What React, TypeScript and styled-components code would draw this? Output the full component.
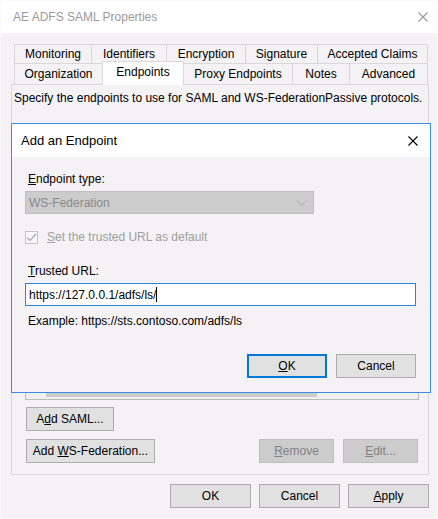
import React from "react";
import styled, { createGlobalStyle, css } from "styled-components";

const GlobalStyle = createGlobalStyle`
  html, body { margin: 0; padding: 0; background: #ffffff; }
  body { font-family: "Liberation Sans", Arial, sans-serif; font-size: 12px; color: #000; }
  * { box-sizing: border-box; }
`;

const BG = "#f4f2f5";

const Window = styled.div`
  position: relative;
  width: 438px;
  height: 519px;
  border: 1px solid #f9f9f9;
  background: ${BG};
  display: flex;
  flex-direction: column;
`;

const TitleBar = styled.div`
  height: 32px;
  background: #ffffff;
  display: flex;
  align-items: center;
  justify-content: space-between;
  padding: 0 9px 0 12px;
  flex: none;
`;

const WindowTitle = styled.span`
  font-size: 12px;
  color: #9a9a9a;
`;

const Body = styled.div`
  flex: 1;
  display: flex;
  flex-direction: column;
  padding: 11px 8px 10px 10px;
`;

const TabRows = styled.div`
  display: flex;
  flex-direction: column;
  margin-left: 3px;
  width: 414px;
`;

const TabRow = styled.div<{ $front?: boolean }>`
  display: flex;
  height: ${(p) => (p.$front ? 21 : 19)}px;
  align-items: stretch;
`;

const Tab = styled.div<{ $w: number; $selected?: boolean }>`
  width: ${(p) => p.$w}px;
  flex: none;
  border: 1px solid #d9d9d9;
  border-bottom: none;
  background: ${BG};
  display: flex;
  align-items: center;
  justify-content: center;
  font-size: 12px;
  color: #000;
  white-space: nowrap;
  & + & { margin-left: -1px; }
  ${(p) =>
    p.$selected &&
    css`
      background: #ffffff;
      position: relative;
      z-index: 2;
      margin-top: -2px;
      margin-bottom: -1px;
      padding-bottom: 3px;
    `}
`;

const Panel = styled.div`
  height: 391px;
  border: 1px solid #d9d9d9;
  background: ${BG};
  display: flex;
  flex-direction: column;
  padding: 6px 8px 0 13px;
`;

const Description = styled.div`
  margin-left: -11px;
  line-height: 15px;
  font-size: 12px;
  white-space: nowrap;
`;

const ListBox = styled.div`
  margin-top: 22px;
  height: 272px;
  width: 394px;
  border: 1px solid #bdbdbd;
  background: #ffffff;
  display: flex;
  flex-direction: column;
  justify-content: flex-end;
`;

const HScroll = styled.div`
  height: 17px;
  background: #f0f0f0;
  display: flex;
  align-items: stretch;
  padding: 1px 0 2px;
`;

const ScrollThumb = styled.div`
  margin-left: 20px;
  width: 271px;
  background: #cdcdcd;
`;

const ButtonRow = styled.div<{ $gap: number }>`
  display: flex;
  align-items: center;
  margin-top: ${(p) => p.$gap}px;
  margin-left: 1px;
  margin-right: 2px;
  gap: 9px;
`;

const Spacer = styled.div`
  flex: 1;
`;

const Button = styled.button<{ $w: number; $disabled?: boolean; $default?: boolean }>`
  width: ${(p) => p.$w}px;
  height: 24px;
  padding: 0;
  font-family: "Liberation Sans", Arial, sans-serif;
  font-size: 12px;
  background: #e1e1e1;
  border: 1px solid #adadad;
  color: #000;
  display: flex;
  align-items: center;
  justify-content: center;
  white-space: pre;
  ${(p) =>
    p.$disabled &&
    css`
      background: #cccccc;
      border-color: #bfbfbf;
      color: #838383;
    `}
  ${(p) =>
    p.$default &&
    css`
      border-color: #0078d7;
      box-shadow: inset 0 0 0 1px #0078d7;
    `}
`;

const Footer = styled.div`
  display: flex;
  justify-content: flex-end;
  gap: 8px;
  margin-top: 9px;
`;

/* ---------- Dialog ---------- */

const Dialog = styled.div`
  position: absolute;
  left: 10px;
  top: 122px;
  width: 420px;
  height: 270px;
  border: 1px solid #3a8ee0;
  background: ${BG};
  display: flex;
  flex-direction: column;
  z-index: 5;
`;

const DialogTitleBar = styled.div`
  height: 33px;
  background: #ffffff;
  display: flex;
  align-items: center;
  justify-content: space-between;
  padding: 0 12px 0 9px;
  flex: none;
`;

const DialogTitle = styled.span`
  font-size: 13px;
  color: #000;
`;

const DialogBody = styled.div`
  display: flex;
  flex-direction: column;
  padding: 14px 14px 0 13px;
`;

const Label = styled.div<{ $top: number; $disabled?: boolean }>`
  margin-top: ${(p) => p.$top}px;
  margin-left: 3px;
  line-height: 16px;
  font-size: 12px;
  color: ${(p) => (p.$disabled ? "#a0a0a0" : "#000")};
  white-space: nowrap;
`;

const Combo = styled.div`
  margin-top: 4px;
  width: 289px;
  height: 23px;
  background: #cccccc;
  border: 1px solid #bfbfbf;
  display: flex;
  align-items: center;
  justify-content: space-between;
  padding: 0 6px 0 3px;
  color: #8a8a8a;
  font-size: 12px;
`;

const CheckRow = styled.div`
  margin-top: 15px;
  height: 16px;
  display: flex;
  align-items: center;
  gap: 9px;
  color: #a0a0a0;
  font-size: 12px;
`;

const CheckBox = styled.div`
  width: 13px;
  height: 13px;
  border: 1px solid #c4c4c4;
  background: #f7f7f7;
  display: flex;
  align-items: center;
  justify-content: center;
`;

const TextInput = styled.div`
  margin-top: 4px;
  width: 391px;
  height: 23px;
  background: #ffffff;
  border: 1px solid #2a84d8;
  display: flex;
  align-items: center;
  padding-left: 3px;
  font-size: 12px;
  color: #000;
`;

const Caret = styled.span`
  display: inline-block;
  width: 1px;
  height: 15px;
  background: #000;
`;

const DialogButtons = styled.div`
  margin-top: 25px;
  display: flex;
  justify-content: flex-end;
  gap: 9px;
`;

const CloseIcon = ({ color }: { color: string }) => (
  <svg width="10" height="10" viewBox="0 0 10 10">
    <path d="M0.5 0.5L9.5 9.5M9.5 0.5L0.5 9.5" stroke={color} strokeWidth="1.1" fill="none" />
  </svg>
);

export default function App() {
  return (
    <>
      <GlobalStyle />
      <Window>
        <TitleBar>
          <WindowTitle>AE ADFS SAML Properties</WindowTitle>
          <CloseIcon color="#9a9a9a" />
        </TitleBar>
        <Body>
          <TabRows>
            <TabRow>
              <Tab $w={78}>Monitoring</Tab>
              <Tab $w={76}>Identifiers</Tab>
              <Tab $w={80}>Encryption</Tab>
              <Tab $w={73}>Signature</Tab>
              <Tab $w={111}>Accepted Claims</Tab>
            </TabRow>
            <TabRow $front>
              <Tab $w={89}>Organization</Tab>
              <Tab $w={82} $selected>
                Endpoints
              </Tab>
              <Tab $w={110}>Proxy Endpoints</Tab>
              <Tab $w={58}>Notes</Tab>
              <Tab $w={79}>Advanced</Tab>
            </TabRow>
          </TabRows>
          <Panel>
            <Description>Specify the endpoints to use for SAML and WS-FederationPassive protocols.</Description>
            <ListBox>
              <HScroll>
                <ScrollThumb />
              </HScroll>
            </ListBox>
            <ButtonRow $gap={7}>
              <Button $w={88}>
                <span>
                  A<u>d</u>d SAML...
                </span>
              </Button>
            </ButtonRow>
            <ButtonRow $gap={8}>
              <Button $w={129}>
                <span>
                  Add <u>W</u>S-Federation...
                </span>
              </Button>
              <Spacer />
              <Button $w={75} $disabled>
                <span>
                  <u>R</u>emove
                </span>
              </Button>
              <Button $w={75} $disabled>
                <span>
                  <u>E</u>dit...
                </span>
              </Button>
            </ButtonRow>
          </Panel>
          <Footer>
            <Button $w={81}>
              <span>OK</span>
            </Button>
            <Button $w={81}>
              <span>Cancel</span>
            </Button>
            <Button $w={81}>
              <span>
                <u>A</u>pply
              </span>
            </Button>
          </Footer>
        </Body>

        <Dialog>
          <DialogTitleBar>
            <DialogTitle>Add an Endpoint</DialogTitle>
            <CloseIcon color="#000" />
          </DialogTitleBar>
          <DialogBody>
            <Label $top={0}>
              <u>E</u>ndpoint type:
            </Label>
            <Combo>
              <span>WS-Federation</span>
              <svg width="11" height="6" viewBox="0 0 11 6">
                <path d="M0.5 0.5L5.5 5.5L10.5 0.5" stroke="#a9a9a9" strokeWidth="1" fill="none" />
              </svg>
            </Combo>
            <CheckRow>
              <CheckBox>
                <svg width="11" height="9" viewBox="0 0 11 9">
                  <path d="M1 4.5L4 7.5L10 1" stroke="#a8a8a8" strokeWidth="1.2" fill="none" />
                </svg>
              </CheckBox>
              <span>
                <u>S</u>et the trusted URL as default
              </span>
            </CheckRow>
            <Label $top={18}>
              <u>T</u>rusted URL:
            </Label>
            <TextInput>
              <span>https://127.0.0.1/adfs/ls/</span>
              <Caret />
            </TextInput>
            <Label $top={7}>Example: https://sts.contoso.com/adfs/ls</Label>
            <DialogButtons>
              <Button $w={80} $default>
                <span>
                  <u>O</u>K
                </span>
              </Button>
              <Button $w={80}>
                <span>Cancel</span>
              </Button>
            </DialogButtons>
          </DialogBody>
        </Dialog>
      </Window>
    </>
  );
}
